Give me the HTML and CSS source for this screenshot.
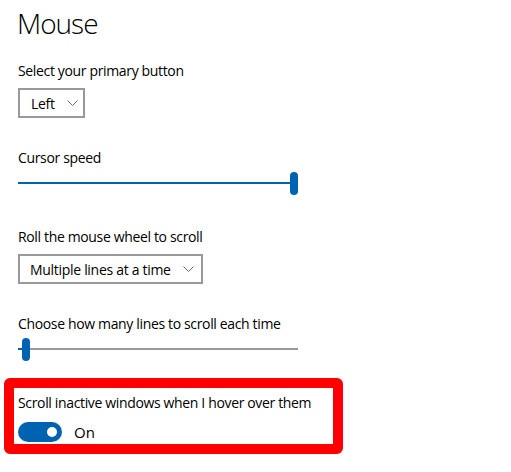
FILE: index.html
```html
<!DOCTYPE html>
<html>
<head>
<meta charset="utf-8">
<link rel="stylesheet" href="styles.css">
</head>
<body>
<main class="page">
  <h1 class="title">Mouse</h1>

  <div class="label first">Select your primary button</div>
  <div class="select select-short">
    <span class="select-text">Left</span>
    <svg class="chev" width="11" height="6" viewBox="0 0 11 6"><path d="M0.5 0.5 L5.5 5.5 L10.5 0.5" fill="none" stroke="#6b6b6b" stroke-width="1"/></svg>
  </div>

  <div class="label gap">Cursor speed</div>
  <div class="slider">
    <div class="fill" style="width:272px"></div>
    <div class="thumb"></div>
  </div>

  <div class="label gap2">Roll the mouse wheel to scroll</div>
  <div class="select select-long">
    <span class="select-text">Multiple lines at a time</span>
    <svg class="chev" width="11" height="6" viewBox="0 0 11 6"><path d="M0.5 0.5 L5.5 5.5 L10.5 0.5" fill="none" stroke="#6b6b6b" stroke-width="1"/></svg>
  </div>

  <div class="label gap">Choose how many lines to scroll each time</div>
  <div class="slider">
    <div class="fill" style="width:4px"></div>
    <div class="thumb"></div>
    <div class="rest"></div>
  </div>

  <section class="highlight">
    <div class="label">Scroll inactive windows when I hover over them</div>
    <div class="toggle-row">
      <div class="toggle"><span class="knob"></span></div>
      <span class="toggle-text">On</span>
    </div>
  </section>
</main>
</body>
</html>
```

FILE: styles.css
```css
html, body {
  margin: 0;
  padding: 0;
  background: #ffffff;
}

body {
  font-family: "Open Sans", "Noto Sans", sans-serif;
  color: #000000;
}

.page {
  display: flex;
  flex-direction: column;
  align-items: flex-start;
  padding: 5px 0 0 18px;
}

.title {
  margin: 0;
  font-size: 28px;
  font-weight: 300;
  letter-spacing: -1px;
  line-height: 36px;
  margin-left: -1px;
}

.label {
  font-size: 14px;
  line-height: 20px;
  letter-spacing: -0.35px;
  white-space: nowrap;
}

.label.first { margin-top: 20px; }
.label.gap { margin-top: 30px; }
.label.gap2 { margin-top: 32px; }

.select {
  margin-top: 7px;
  box-sizing: border-box;
  height: 30px;
  border: 2px solid #999999;
  display: flex;
  align-items: center;
  padding: 0 8px 0 11px;
  gap: 12px;
  font-size: 14px;
  letter-spacing: -0.3px;
}

.select-short { width: 67px; }
.select-long { width: 185px; padding-left: 10px; }

.select-text { white-space: nowrap; }

.chev { display: block; flex: none; }

.slider {
  margin-top: 3px;
  width: 280px;
  height: 24px;
  display: flex;
  align-items: center;
}

.fill {
  height: 2px;
  background: #0063b1;
  flex: none;
}

.rest {
  height: 2px;
  flex: 1;
  background: #999999;
}

.thumb {
  flex: none;
  width: 8px;
  height: 23px;
  border-radius: 4px;
  background: #0063b1;
}

.highlight {
  margin-top: 17px;
  margin-left: -14px;
  box-sizing: border-box;
  width: 339px;
  border: 10px solid #ff0000;
  border-radius: 6px;
  padding: 5px 0 2px 4px;
}

.toggle-row {
  margin-top: 9px;
  display: flex;
  align-items: center;
  gap: 12px;
}

.toggle {
  width: 44px;
  height: 20px;
  border-radius: 10px;
  background: #0063b1;
  display: flex;
  align-items: center;
  justify-content: flex-end;
  padding-right: 5px;
  box-sizing: border-box;
}

.knob {
  width: 10px;
  height: 10px;
  border-radius: 50%;
  background: #ffffff;
}

.toggle-text {
  font-size: 15px;
  line-height: 20px;
}
```
